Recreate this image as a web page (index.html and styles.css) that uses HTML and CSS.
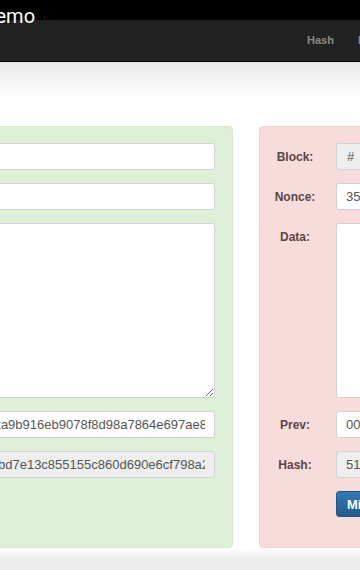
FILE: index.html
```html
<!DOCTYPE html>
<html>
<head>
	<title>Blockchain Demo</title>
	<link rel="stylesheet" href="styles.css">
</head>
<body>
	<div class="titulo"><span class="titulo-texto">Blockchain Demo</span></div>
	<nav class="barra">
		<ul class="menu">
			<li>Hash</li>
			<li>Block</li>
			<li>Blockchain</li>
			<li>Distributed</li>
		</ul>
	</nav>
	<div class="principal">
		<div class="bloques">
			<form class="pozo pozo-ok">
				<div class="fila">
					<label>Block:</label>
					<div class="grupo"><span class="extra">#</span><input type="text" class="campo" value="1"></div>
				</div>
				<div class="fila">
					<label>Nonce:</label>
					<input type="text" class="campo" value="11316">
				</div>
				<div class="fila fila-datos">
					<label>Data:</label>
					<textarea class="campo area"></textarea>
				</div>
				<div class="fila">
					<label>Prev:</label>
					<input type="text" class="campo" value="0000c32a9b916eb9078f8d98a7864e697ae83b4d1c06e2a95f7e3d80c4b1a962">
				</div>
				<div class="fila">
					<label>Hash:</label>
					<input type="text" class="campo" readonly value="000021fbd7e13c855155c860d690e6cf798a24c1b9e0c3a7d56e2b8d04c19d7a">
				</div>
				<div class="fila">
					<span></span>
					<div><input type="button" class="boton" value="Mine"></div>
				</div>
			</form>
			<form class="pozo pozo-mal">
				<div class="fila">
					<label>Block:</label>
					<div class="grupo"><span class="extra">#</span><input type="text" class="campo" value="2"></div>
				</div>
				<div class="fila">
					<label>Nonce:</label>
					<input type="text" class="campo" value="35230">
				</div>
				<div class="fila fila-datos">
					<label>Data:</label>
					<textarea class="campo area"></textarea>
				</div>
				<div class="fila">
					<label>Prev:</label>
					<input type="text" class="campo" value="000021fbd7e13c855155c860d690e6cf798a24c1b9e0c3a7d56e2b8d04c19d7a">
				</div>
				<div class="fila">
					<label>Hash:</label>
					<input type="text" class="campo" readonly value="51e8c2d4a7b09f3e6c1d5a28b4e7f90c3d6a1b8e5f2c7d40a9b3e6f1c8d2a57b">
				</div>
				<div class="fila">
					<span></span>
					<div><input type="button" class="boton" value="Mine"></div>
				</div>
			</form>
		</div>
		<div class="pie"></div>
	</div>
</body>
</html>
```

FILE: styles.css
```css
body
{
	margin: 0;
	overflow: hidden;
	font-family: "Liberation Sans", Arial, sans-serif;
	background-color: white;
}
.titulo
{
	height: 20px;
	background-color: black;
	white-space: nowrap;
}
.titulo-texto
{
	display: inline-block;
	margin-left: -120px;
	margin-top: 6px;
	line-height: 20px;
	font-size: 20px;
	color: white;
	font-family: Roboto, "Liberation Sans", sans-serif;
}
.barra
{
	height: 41px;
	background-color: #222;
	border-bottom: 1px solid #080808;
	overflow: hidden;
}
.menu
{
	display: flex;
	margin: 0;
	padding: 0 0 0 295px;
	list-style: none;
	white-space: nowrap;
}
.menu li
{
	padding: 0 12px;
	line-height: 41px;
	font-size: 11px;
	font-weight: bold;
	color: #8a8a8a;
}
.principal
{
	padding-top: 64px;
	background: linear-gradient(#e8e8e8, white 36px);
}
.bloques
{
	display: flex;
	gap: 26px;
	margin-left: -136px;
}
.pozo
{
	flex-shrink: 0;
	box-sizing: border-box;
	width: 369px;
	margin: 0;
	padding: 16px 17px 30px 0;
	border-radius: 4px;
	display: flex;
	flex-direction: column;
	gap: 13px;
}
.pozo-ok
{
	background-color: #dff0d8;
	border: 1px solid #d6e9c6;
}
.pozo-mal
{
	background-color: #f8dcdc;
	border: 1px solid #f0d2d2;
}
.fila
{
	display: grid;
	grid-template-columns: 70px 1fr;
	column-gap: 6px;
	align-items: center;
}
.fila label
{
	text-align: center;
	font-size: 12px;
	font-weight: bold;
	color: #5a4545;
}
.fila-datos
{
	align-items: start;
}
.fila-datos label
{
	padding-top: 7px;
}
.campo
{
	box-sizing: border-box;
	width: 100%;
	height: 27px;
	margin: 0;
	padding: 0 9px;
	border: 1px solid #d2d2d2;
	border-radius: 3px;
	background-color: white;
	font-family: "Liberation Sans", Arial, sans-serif;
	font-size: 13px;
	color: #555;
	outline: none;
}
.campo[readonly]
{
	background-color: #eee;
}
.area
{
	display: block;
	height: 175px;
	resize: vertical;
	padding-top: 6px;
}
.grupo
{
	display: flex;
}
.extra
{
	flex-shrink: 0;
	width: 28px;
	height: 27px;
	box-sizing: border-box;
	border: 1px solid #d2d2d2;
	border-right: 0;
	border-radius: 3px 0 0 3px;
	background-color: #eee;
	line-height: 25px;
	text-align: center;
	font-size: 13px;
	color: #555;
}
.grupo .campo
{
	border-radius: 0 3px 3px 0;
}
.boton
{
	display: block;
	height: 26px;
	padding: 0 10px;
	border: 1px solid #245580;
	border-radius: 3px;
	background: linear-gradient(#337ab7, #265a88);
	color: white;
	font-family: "Liberation Sans", Arial, sans-serif;
	font-size: 13px;
	font-weight: bold;
}
.pie
{
	height: 30px;
	background: linear-gradient(white, #ececec 12px);
}
```
